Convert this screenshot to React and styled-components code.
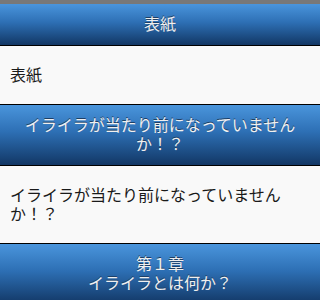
import React from 'react';
import styled, { createGlobalStyle } from 'styled-components';

const GlobalStyle = createGlobalStyle`
  html, body {
    margin: 0;
    padding: 0;
    background: #f9f9f9;
  }
  body {
    font-family: "DejaVu Sans", "Noto Sans CJK JP", sans-serif;
  }
`;

const Page = styled.div`
  width: 320px;
  height: 300px;
  overflow: hidden;
  background: #f9f9f9;
`;

const TopStrip = styled.div`
  height: 4px;
  background: #787878;
`;

const Bar = styled.h1`
  margin: 0;
  padding: 11px 15px;
  font-size: 16px;
  line-height: 19px;
  font-weight: normal;
  text-align: center;
  color: #f0f0f0;
  text-shadow: 0 -1px 0 #1d3f66;
  background: linear-gradient(#4a95dc, #2d6fb4 45%, #123765);
  border-bottom: 1px solid #000;
`;

const Content = styled.div`
  padding: 20px 10px 19px;
  font-size: 16px;
  line-height: 19px;
  color: #1a1a1a;
  background: #f9f9f9;
  border-bottom: 1px solid #000;
`;

const sections = [
  { title: ['表紙'], body: '表紙' },
  {
    title: ['イライラが当たり前になっていませんか！？'],
    body: 'イライラが当たり前になっていませんか！？',
  },
  { title: ['第１章', 'イライラとは何か？'] },
];

export default function App() {
  return (
    <Page>
      <GlobalStyle />
      <TopStrip />
      {sections.map((s, i) => (
        <React.Fragment key={i}>
          <Bar>
            {s.title.map((line, j) => (
              <div key={j}>{line}</div>
            ))}
          </Bar>
          {s.body && <Content>{s.body}</Content>}
        </React.Fragment>
      ))}
    </Page>
  );
}
